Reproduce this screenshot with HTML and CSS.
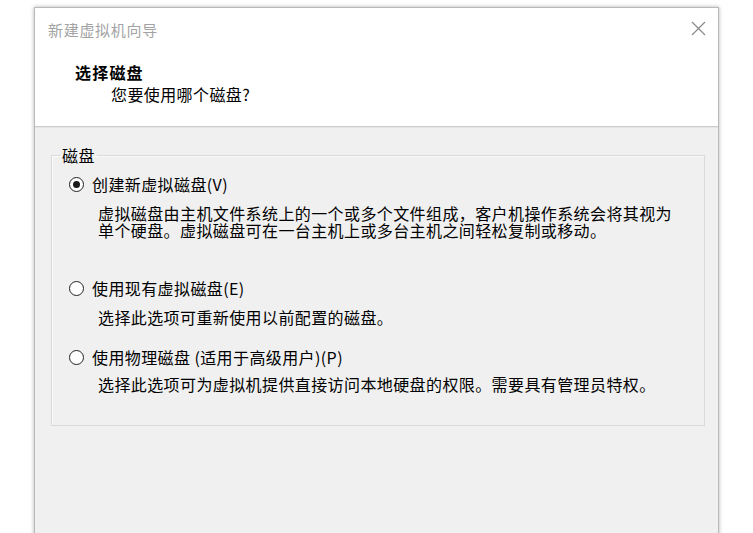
FILE: index.html
```html
<!DOCTYPE html>
<html lang="zh-CN">
<head>
    <meta charset="UTF-8">
    <title>新建虚拟机向导</title>
    <link rel="stylesheet" href="styles.css">
</head>
<body>
    <div class="window">
        <div class="header">
            <div class="titlebar">
                <span class="title">新建虚拟机向导</span>
                <svg class="close" width="15" height="15" viewBox="0 0 15 15">
                    <path d="M1 1 L14 14 M14 1 L1 14" stroke="#8a8a8a" stroke-width="1.2" fill="none"/>
                </svg>
            </div>
            <div class="heading">选择磁盘</div>
            <div class="subheading">您要使用哪个磁盘?</div>
        </div>
        <div class="content">
            <fieldset class="group">
                <legend>磁盘</legend>
                <div class="option first">
                    <span class="radio checked"></span>
                    <span>创建新虚拟磁盘(V)</span>
                </div>
                <div class="desc">
                    <div>虚拟磁盘由主机文件系统上的一个或多个文件组成，客户机操作系统会将其视为</div>
                    <div>单个硬盘。虚拟磁盘可在一台主机上或多台主机之间轻松复制或移动。</div>
                </div>
                <div class="option second">
                    <span class="radio"></span>
                    <span>使用现有虚拟磁盘(E)</span>
                </div>
                <div class="desc">选择此选项可重新使用以前配置的磁盘。</div>
                <div class="option third">
                    <span class="radio"></span>
                    <span>使用物理磁盘 (适用于高级用户)(P)</span>
                </div>
                <div class="desc last">选择此选项可为虚拟机提供直接访问本地硬盘的权限。需要具有管理员特权。</div>
            </fieldset>
        </div>
    </div>
</body>
</html>
```

FILE: styles.css
```css
body {
    margin: 0;
    background: #fff;
    font-family: "Noto Sans CJK SC", "Noto Sans", sans-serif;
    color: #000;
    overflow: hidden;
}

.window {
    margin: 7px 0 0 34px;
    width: 683px;
    height: 540px;
    border: 1px solid #b9b9b9;
    border-bottom: none;
    background: #f0f0f0;
    box-shadow: 0 0 4px rgba(0, 0, 0, 0.3);
}

.header {
    background: #fff;
    height: 118px;
    border-bottom: 1px solid #cdcdcd;
    box-shadow: 0 1px 0 #e4e4e4;
}

.titlebar {
    display: flex;
    justify-content: space-between;
    align-items: flex-start;
    padding: 13px 12px 0 13px;
}

.title {
    font-size: 15px;
    line-height: 17px;
    letter-spacing: 0.7px;
    color: #a3a3a3;
}

.heading {
    margin: 26px 0 0 40px;
    font-size: 16px;
    line-height: 17px;
    font-weight: bold;
    letter-spacing: 1.2px;
}

.subheading {
    margin: 5px 0 0 76px;
    font-size: 16px;
    line-height: 17px;
    letter-spacing: 0.4px;
}

.content {
    padding-top: 20px;
}

.group {
    margin: 0 13px 0 16px;
    padding: 0 0 32px 0;
    border: 1px solid #dadada;
    box-shadow: inset 1px 1px 0 #fafafa;
    font-size: 16px;
    line-height: 17px;
    letter-spacing: 0.4px;
}

.group legend {
    margin-left: 8px;
    padding: 0 2px;
    line-height: 17px;
}

.option {
    display: flex;
    align-items: center;
    padding-left: 17px;
}

.option.first {
    margin-top: 12px;
}

.option.second {
    margin-top: 41px;
}

.option.third {
    margin-top: 23px;
}

.radio {
    width: 13px;
    height: 13px;
    border: 1px solid #222;
    border-radius: 50%;
    background: #fff;
    margin-right: 8px;
    display: flex;
    align-items: center;
    justify-content: center;
    flex-shrink: 0;
}

.radio.checked::after {
    content: "";
    width: 7px;
    height: 7px;
    border-radius: 50%;
    background: #1a1a1a;
}

.desc {
    margin: 12px 0 0 46px;
}

.desc.last {
    margin-top: 10px;
}
```
